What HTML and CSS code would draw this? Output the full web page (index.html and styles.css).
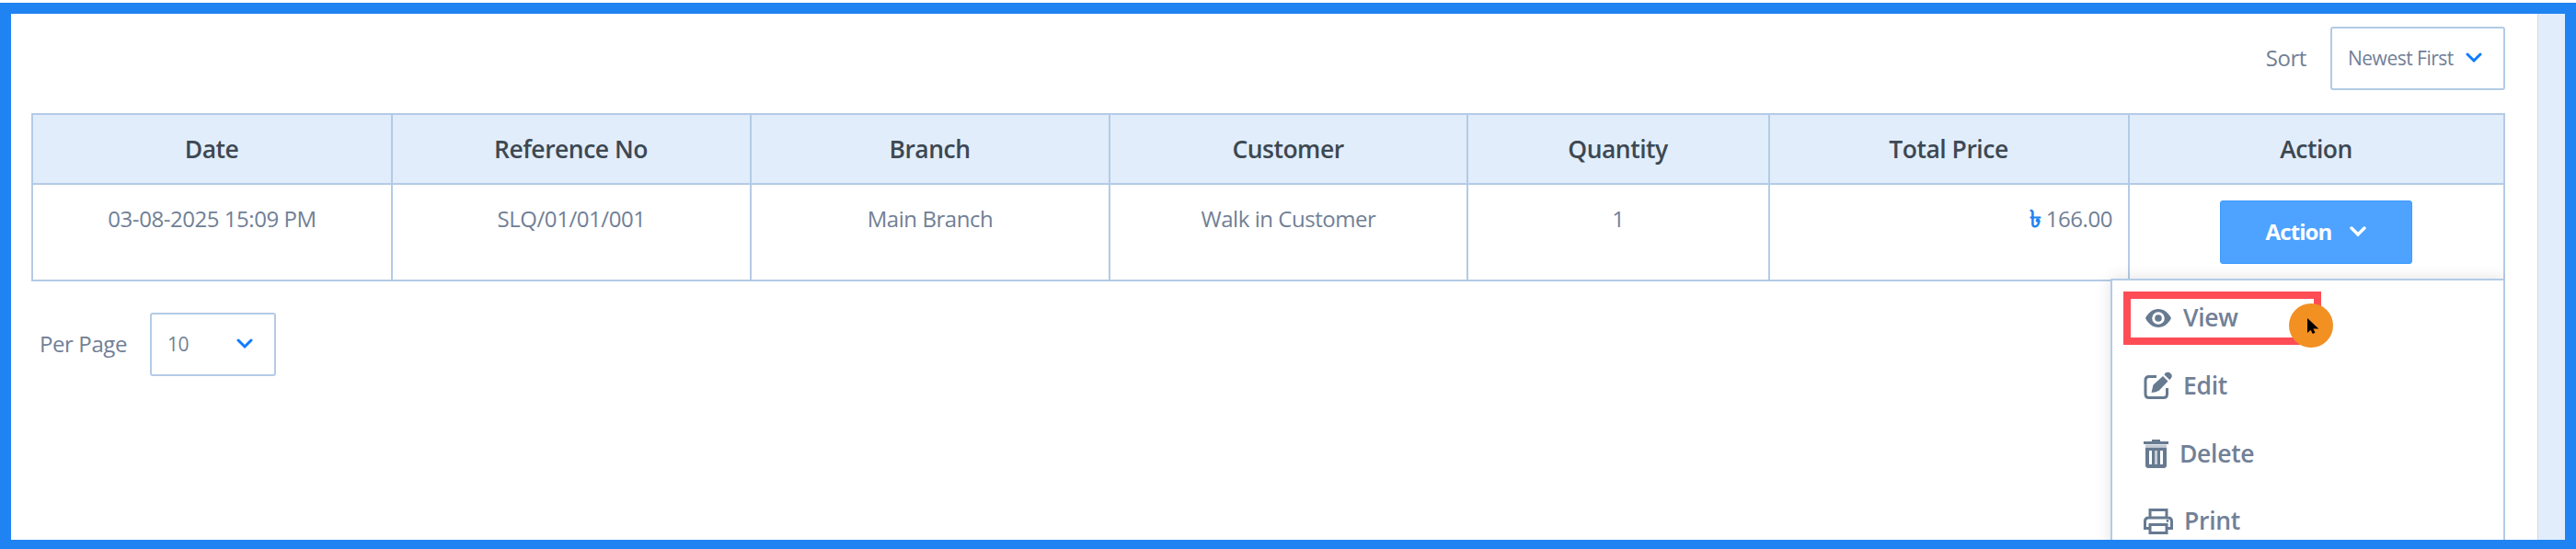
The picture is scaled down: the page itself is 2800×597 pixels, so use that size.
FILE: index.html
```html
<!DOCTYPE html>
<html lang="en">
<head>
    <meta charset="UTF-8">
    <title>Sales List</title>
    <link rel="stylesheet" href="styles.css">
</head>
<body>
    <div class="frame">
        <main class="content">
            <div class="toolbar">
                <span class="label">Sort</span>
                <button class="select sort-select">
                    <span>Newest First</span>
                    <svg class="chevron" viewBox="0 0 18 12"><path d="M2 2l7 7 7-7"/></svg>
                </button>
            </div>

            <div class="table-wrap">
                <table class="sales">
                    <colgroup>
                        <col class="w-date"><col class="w-ref"><col class="w-branch"><col class="w-customer"><col class="w-qty"><col class="w-price"><col class="w-action">
                    </colgroup>
                    <thead>
                        <tr>
                            <th>Date</th>
                            <th>Reference No</th>
                            <th>Branch</th>
                            <th>Customer</th>
                            <th>Quantity</th>
                            <th>Total Price</th>
                            <th>Action</th>
                        </tr>
                    </thead>
                    <tbody>
                        <tr>
                            <td>03-08-2025 15:09 PM</td>
                            <td>SLQ/01/01/001</td>
                            <td>Main Branch</td>
                            <td>Walk in Customer</td>
                            <td>1</td>
                            <td class="price"><span class="taka">৳</span> 166.00</td>
                            <td>
                                <button class="action-btn">
                                    <span>Action</span>
                                    <svg class="chevron" viewBox="0 0 18 12"><path d="M2 2l7 7 7-7"/></svg>
                                </button>
                            </td>
                        </tr>
                    </tbody>
                </table>

                <div class="menu">
                    <a class="menu-item view">
                        <svg class="icon-view" viewBox="0 0 28 20"><path fill-rule="evenodd" d="M14 0C8 0 3 4 0 10c3 6 8 10 14 10s11-4 14-10C25 4 20 0 14 0zm0 3.200a6.800 6.800 0 1 1 0 13.600a6.800 6.800 0 0 1 0-13.600z"/><circle cx="14" cy="10" r="3.800"/></svg>
                        <span>View</span>
                    </a>
                    <a class="menu-item edit">
                        <svg class="icon-edit" viewBox="0 0 31 31"><path class="line" d="M14 5.500H6Q2 5.500 2 9.500v15q0 4 4 4H21.500q4 0 4-4V18"/><path d="M8.500 23l2-8.500L21 5l5.500 5.500L17 20.500q-3 2-8.500 2.500zM22.500 3.500c2-5 8.500-2 8.300 1.800q-.3 2-2.600 3.700z"/></svg>
                        <span>Edit</span>
                    </a>
                    <a class="menu-item delete">
                        <svg class="icon-delete" viewBox="0 0 27 31"><path fill-rule="evenodd" d="M9 0h9v2h9v3H0V2h9zM2 8.500h23V28q0 3-3 3H5q-3 0-3-3zM6 12v15h3V12zm12 0v15h3V12z"/><path class="shade" d="M2 5.500h23v3H2zM12 12h3v15h-3z"/></svg>
                        <span>Delete</span>
                    </a>
                    <a class="menu-item print">
                        <svg class="icon-print" viewBox="0 0 32 28"><path class="line" d="M7 10V1.500h18V10M7 21.500H1.500V14q0-4 4-4h21q4 0 4 4v7.500H25M7 17.500h18v9H7z"/><circle cx="26" cy="13.500" r="1.400"/></svg>
                        <span>Print</span>
                    </a>
                    <div class="highlight"></div>
                    <svg class="pointer" viewBox="0 0 48 48"><circle class="dot" cx="24" cy="24" r="24"/><path d="M20 16v16l3.500-3.200 2.300 4.200 2.700-1.300-2.200-4.200h6z"/></svg>
                </div>
            </div>

            <div class="pager">
                <span class="label">Per Page</span>
                <button class="select page-select">
                    <span>10</span>
                    <svg class="chevron" viewBox="0 0 18 12"><path d="M2 2l7 7 7-7"/></svg>
                </button>
            </div>
        </main>
        <aside class="gutter"></aside>
    </div>
</body>
</html>
```
FILE: styles.css
```css
* {
    box-sizing: border-box;
}
body {
    margin: 0;
    padding-top: 3px;
    height: 597px;
    overflow: hidden;
    background: #fff;
    color: #718096;
    font-family: "Open Sans", sans-serif;
    font-size: 24px;
}
.frame {
    display: flex;
    height: 594px;
    border: 12px solid #2083f2;
    border-bottom-width: 10px;
    overflow: hidden;
}
.content {
    flex: 1;
    padding: 14px 35px 0 22px;
}
.gutter {
    width: 30px;
    background: #e1edfb;
    border-left: 1px solid #d5d9e0;
}
button {
    font-family: inherit;
    cursor: pointer;
}
.toolbar,
.pager {
    display: flex;
    align-items: center;
}
.toolbar {
    justify-content: flex-end;
    gap: 26px;
}
.label {
    padding-bottom: 2px;
    letter-spacing: -0.4px;
}
.select {
    display: flex;
    align-items: center;
    justify-content: space-between;
    height: 69px;
    padding: 0 23px 1px 17px;
    background: #fff;
    border: 2px solid #b3cbe6;
    border-radius: 3px;
    color: #718096;
    font-size: 21px;
    letter-spacing: -0.5px;
}
.sort-select {
    width: 190px;
}
.page-select {
    width: 137px;
}
.chevron {
    width: 18px;
    height: 12px;
    fill: none;
    stroke: #0d7bff;
    stroke-width: 3;
    stroke-linecap: round;
}
.table-wrap {
    position: relative;
    margin-top: 25px;
}
.sales {
    width: 2689px;
    table-layout: fixed;
    border-collapse: collapse;
}
.w-date { width: 391px; }
.w-ref { width: 390px; }
.w-branch { width: 390px; }
.w-customer { width: 389px; }
.w-qty { width: 328px; }
.w-price { width: 391px; }
.w-action { width: 408px; }
.sales th,
.sales td {
    border: 2px solid #b3cbe6;
    text-align: center;
}
.sales th {
    height: 76px;
    padding: 0 1px 1px 0;
    background: #e1edfb;
    color: #3d4852;
    font-size: 26.500px;
    font-weight: 600;
    letter-spacing: -0.5px;
}
.sales td {
    height: 104px;
    padding: 17px;
    vertical-align: top;
    line-height: 40px;
    letter-spacing: -0.45px;
}
.sales .price {
    text-align: right;
}
.taka {
    margin-right: -1px;
    color: #2083f2;
    font-size: 26px;
    font-weight: 600;
    line-height: 1;
}
.action-btn {
    display: flex;
    align-items: center;
    justify-content: center;
    gap: 20px;
    width: 209px;
    height: 69px;
    margin: 0 auto 0 81px;
    padding: 0 7px 2px 7px;
    background: #4da3ff;
    border: 1px solid #3d9bff;
    border-radius: 3px;
    color: #fff;
    font-size: 24px;
    font-weight: 700;
    letter-spacing: -0.9px;
}
.action-btn .chevron {
    stroke: #fff;
    stroke-width: 3.400;
}
.menu {
    position: absolute;
    top: 180px;
    right: 0;
    width: 429px;
    height: 330px;
    padding-top: 4px;
    background: #fff;
    border: 2px solid #b3cbe6;
    box-shadow: 0 0 16px rgba(0, 0, 0, 0.12);
    clip-path: inset(-20px 0 0 -20px);
}
.menu-item {
    display: flex;
    align-items: center;
    height: 73.700px;
    padding-left: 34px;
    font-size: 26.500px;
    font-weight: 600;
    letter-spacing: -0.3px;
}
.menu-item span {
    padding-bottom: 1px;
}
.menu svg {
    fill: #667a90;
}
.menu .line {
    fill: none;
    stroke: #667a90;
    stroke-width: 3;
}
.menu .shade {
    fill: #c3ccd6;
}
.icon-view {
    width: 28px;
    margin: 0 13px 0 2px;
}
.icon-edit {
    width: 31px;
    margin-right: 12px;
}
.icon-delete {
    width: 27px;
    margin-right: 12px;
}
.icon-print {
    width: 32px;
    margin-right: 12px;
}
.highlight {
    position: absolute;
    top: 12px;
    left: 12px;
    width: 215px;
    height: 58px;
    border: 8px solid #ff4d55;
}
.menu .pointer {
    position: absolute;
    top: 25px;
    left: 192px;
    width: 48px;
    height: 48px;
    fill: #000;
}
.pointer .dot {
    fill: #f29022;
}
.pager {
    margin-top: 34px;
    padding-left: 9px;
    gap: 25px;
}
```
